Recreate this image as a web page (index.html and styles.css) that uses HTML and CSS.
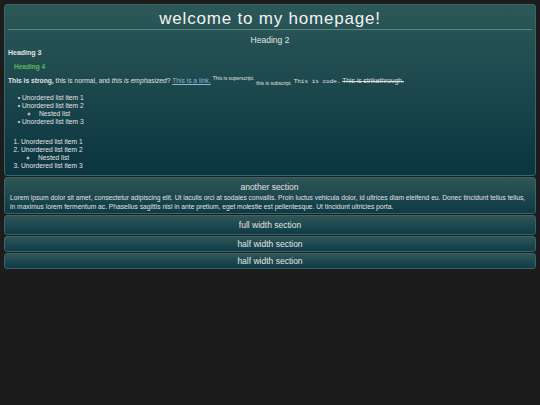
FILE: index.html
```html
<!DOCTYPE html>
<html lang="en">
<head>
    <title>homepage</title>
    <link rel="stylesheet" href="styles.css">
</head>
<body>
    <div class="section main">
        <h1>welcome to my homepage!</h1>
        <h2>Heading 2</h2>
        <h3>Heading 3</h3>
        <h4>Heading 4</h4>
        <p><strong>This is strong,</strong> this is normal, and <em>this is emphasized</em>? <a href="#">This is a link.</a> <sup>This is superscript.</sup> <sub>this is subscript.</sub> <code>This is code.</code> <del>This is strikethrough.</del></p>

        <ul class="bullets">
            <li>Unordered list item 1</li>
            <li>Unordered list item 2
                <ul>
                    <li>Nested list</li>
                </ul>
            </li>
            <li>Unordered list item 3</li>
        </ul>

        <ol>
            <li>Unordered list item 1</li>
            <li>Unordered list item 2
                <ul>
                    <li>Nested list</li>
                </ul>
            </li>
            <li>Unordered list item 3</li>
        </ol>
    </div>

    <div class="section another">
        <h2>another section</h2>
        <p>Lorem ipsum dolor sit amet, consectetur adipiscing elit. Ut iaculis orci at sodales convallis. Proin luctus vehicula dolor, id ultrices diam eleifend eu. Donec tincidunt tellus tellus, in maximus lorem fermentum ac. Phasellus sagittis nisl in ante pretium, eget molestie est pellentesque. Ut tincidunt ultricies porta.</p>
    </div>

    <div class="section full">
        <h2>full width section</h2>
    </div>
    <div class="section half">
        <h2>half width section</h2>
    </div>
    <div class="section half">
        <h2>half width section</h2>
    </div>
</body>
</html>
```

FILE: styles.css
```css
body{
    margin: 4px;
    background-color: #1c1c1c;
    color: #e2e2e2;
    font-family: 'Liberation Sans', Arial, sans-serif;
    font-size: 6.7px;
}

.section{
    border: 1px solid #3d6466;
    border-radius: 3px;
    background: linear-gradient(to bottom, #2d5858, #0a3541);
    margin-bottom: 1px;
}

.main{
    padding: 0 3px 5px 3px;
}

h1{
    margin: 0;
    padding-top: 4px;
    font-size: 17px;
    line-height: 20px;
    font-weight: normal;
    letter-spacing: 0.8px;
    text-align: center;
    color: #f2f2f2;
    border-bottom: 1px solid #5a8581;
}

h2{
    margin: 5px 0 0 0;
    font-size: 8.5px;
    line-height: 10px;
    font-weight: normal;
    text-align: center;
}

h3{
    margin: 4px 0 0 0;
    font-size: 7px;
    line-height: 8px;
}

h4{
    margin: 6px 0 0 6px;
    font-size: 6.5px;
    line-height: 8px;
    color: #5db85c;
}

p{
    margin: 6px 0 0 0;
    line-height: 8px;
}

a{
    color: #8ab8cf;
}

sup, sub{
    font-size: 5px;
    line-height: 0;
}

code{
    font-family: 'Liberation Mono', monospace;
    font-size: 6px;
}

del{
    color: #dcdcdc;
}

ul, ol{
    margin: 8px 0 0 0;
    padding-left: 14px;
    line-height: 8px;
}

.bullets > li::marker{
    content: "\2022  ";
}

ol{
    margin-top: 12px;
    padding-left: 13px;
}

li ul{
    margin: 0;
    padding-left: 17px;
}

.another{
    padding: 0 6px 2px 5px;
    background: linear-gradient(to bottom, #2f5657, #0d3a46);
}

.another h2{
    margin-top: 4px;
}

.another p{
    margin-top: 1px;
    line-height: 9px;
}

.full, .half{
    background: linear-gradient(to bottom, #2f5657, #0e3b47);
}

.full h2{
    margin: 0;
    line-height: 18px;
}

.half h2{
    margin: 0;
    line-height: 14px;
}
```
